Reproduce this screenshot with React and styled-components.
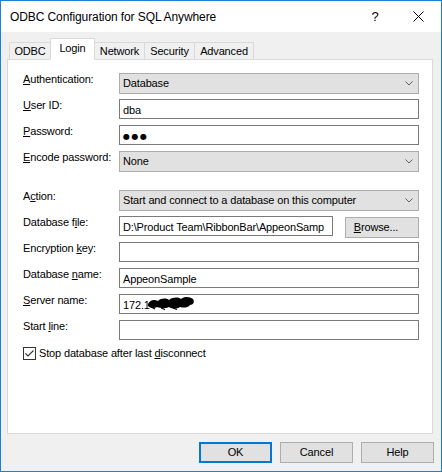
import React from "react";
import styled, { createGlobalStyle } from "styled-components";

const GlobalStyle = createGlobalStyle`
  html, body { margin: 0; padding: 0; background: #ffffff; }
  body { font-family: "Liberation Sans", Arial, sans-serif; }
`;

const Window = styled.div`
  width: 442px;
  height: 472px;
  box-sizing: border-box;
  border: 1px solid #1a7fd6;
  background: #f0f0f0;
  display: flex;
  flex-direction: column;
  font-family: "Liberation Sans", Arial, sans-serif;
  font-size: 11px;
  letter-spacing: -0.15px;
  color: #000;
`;

const TitleBar = styled.div`
  height: 31px;
  flex-shrink: 0;
  background: #fff;
  display: flex;
  align-items: stretch;
`;

const Title = styled.div`
  flex: 1;
  display: flex;
  align-items: center;
  padding-left: 9px;
  font-size: 12px;
  letter-spacing: -0.1px;
  line-height: 14px;
`;

const TitleButton = styled.div`
  width: ${(p) => p.$w}px;
  display: flex;
  align-items: center;
  justify-content: center;
  font-size: 13px;
  letter-spacing: 0;
`;

const Body = styled.div`
  flex: 1;
  display: flex;
  flex-direction: column;
  padding: 6px 8px 0 6px;
`;

const TabStrip = styled.div`
  display: flex;
  align-items: flex-end;
  height: 22px;
  padding-left: 2px;
  margin-bottom: -1px;
  position: relative;
  z-index: 1;
`;

const Tab = styled.div`
  box-sizing: border-box;
  width: ${(p) => p.$w}px;
  height: ${(p) => (p.$active ? 22 : 18)}px;
  margin-left: -1px;
  &:first-child { margin-left: 0; }
  border: 1px solid #d9d9d9;
  border-bottom-color: ${(p) => (p.$active ? "#ffffff" : "#d9d9d9")};
  background: ${(p) => (p.$active ? "#ffffff" : "#f0f0f0")};
  display: flex;
  align-items: center;
  justify-content: center;
  padding-bottom: ${(p) => (p.$active ? 2 : 0)}px;
  line-height: 13px;
  position: relative;
  z-index: ${(p) => (p.$active ? 2 : 1)};
`;

const Panel = styled.div`
  height: 375px;
  box-sizing: border-box;
  background: #fff;
  border: 1px solid #d9d9d9;
  padding: 13px 0 0 15px;
  display: flex;
  flex-direction: column;
  gap: 19px;
`;

const Section = styled.div`
  display: flex;
  flex-direction: column;
  gap: 6px;
`;

const Row = styled.div`
  display: flex;
  align-items: flex-start;
  height: 20px;
`;

const Label = styled.div`
  width: 96px;
  flex-shrink: 0;
  line-height: 13px;
  white-space: nowrap;
`;

const Key = styled.u`
  text-decoration: underline;
  text-underline-offset: 1px;
`;

const Combo = styled.div`
  width: ${(p) => p.$w || 300}px;
  height: 21px;
  box-sizing: border-box;
  border: 1px solid #adadad;
  background: #e1e1e1;
  display: flex;
  align-items: center;
  justify-content: space-between;
  padding: 0 5px 0 3px;
  line-height: 13px;
  white-space: nowrap;
`;

const TextBox = styled.div`
  width: ${(p) => p.$w || 300}px;
  height: 20px;
  box-sizing: border-box;
  border: 1px solid #7a7a7a;
  background: #fff;
  padding: 4px 2px 0 3px;
  line-height: 13px;
  white-space: nowrap;
  overflow: hidden;
  display: flex;
  align-items: flex-start;
`;

const Dots = styled.span`
  font-family: "DejaVu Sans", sans-serif;
  font-size: 8px;
  letter-spacing: 1.5px;
  line-height: 13px;
`;

const Button = styled.div`
  width: ${(p) => p.$w || 73}px;
  height: 21px;
  box-sizing: border-box;
  border: ${(p) => (p.$primary ? "2px solid #0078d7" : "1px solid #adadad")};
  background: #e1e1e1;
  display: flex;
  align-items: center;
  justify-content: center;
  line-height: 13px;
  flex-shrink: 0;
`;

const BrowseButton = styled(Button)`
  margin-left: 12px;
  margin-top: 1px;
  padding-right: 12px;
`;

const CheckRow = styled.div`
  display: flex;
  align-items: center;
  gap: 3px;
  height: 13px;
  margin-top: 1px;
  line-height: 13px;
`;

const CheckBox = styled.div`
  width: 13px;
  height: 13px;
  box-sizing: border-box;
  border: 1px solid #333;
  background: #fff;
  display: flex;
`;

const Footer = styled.div`
  display: flex;
  justify-content: flex-end;
  gap: 8px;
  margin-top: 8px;
  margin-right: -1px;
`;

const Chevron = () => (
  <svg width="8" height="5" viewBox="0 0 8 5">
    <polyline points="0.5,0.5 4,4 7.5,0.5" fill="none" stroke="#606060" strokeWidth="1" />
  </svg>
);

const CloseIcon = () => (
  <svg width="11" height="11" viewBox="0 0 11 11">
    <path d="M0.5 0.5 L10.5 10.5 M10.5 0.5 L0.5 10.5" stroke="#000" strokeWidth="1" />
  </svg>
);

const CheckMark = () => (
  <svg width="11" height="11" viewBox="0 0 11 11">
    <polyline points="1.5,5.5 4,8 9.5,2.5" fill="none" stroke="#333" strokeWidth="1.1" />
  </svg>
);

const Scribble = () => (
  <svg width="48" height="14" viewBox="0 0 48 14" style={{ marginLeft: -3, marginTop: -3 }}>
    <path
      d="M1 8 C3 4 7 3 11 5 C14 2 19 2 22 4 C26 1 31 1 34 3 C38 0 43 1 46 3 C48 6 46 9 43 9 C41 12 36 12 33 11 C30 13 25 13 22 11 C18 13 13 12 10 11 C7 13 3 12 1 10 Z"
      fill="#000"
    />
    <path d="M4 11 L8 13 M14 12 L18 13.5 M26 12 L30 13.5" stroke="#000" strokeWidth="1.2" />
  </svg>
);

const tabs = [
  { label: "ODBC", w: 42 },
  { label: "Login", w: 45, active: true },
  { label: "Network", w: 51 },
  { label: "Security", w: 51 },
  { label: "Advanced", w: 60 },
];

export default function App() {
  return (
    <>
      <GlobalStyle />
      <Window>
        <TitleBar>
          <Title>ODBC Configuration for SQL Anywhere</Title>
          <TitleButton $w={40}>?</TitleButton>
          <TitleButton $w={46}>
            <CloseIcon />
          </TitleButton>
        </TitleBar>
        <Body>
          <TabStrip>
            {tabs.map((t) => (
              <Tab key={t.label} $w={t.w} $active={t.active}>
                {t.label}
              </Tab>
            ))}
          </TabStrip>
          <Panel>
            <Section>
              <Row>
                <Label><Key>A</Key>uthentication:</Label>
                <Combo>
                  <span>Database</span>
                  <Chevron />
                </Combo>
              </Row>
              <Row>
                <Label><Key>U</Key>ser ID:</Label>
                <TextBox>dba</TextBox>
              </Row>
              <Row>
                <Label><Key>P</Key>assword:</Label>
                <TextBox>
                  <Dots>●●●</Dots>
                </TextBox>
              </Row>
              <Row>
                <Label><Key>E</Key>ncode password:</Label>
                <Combo>
                  <span>None</span>
                  <Chevron />
                </Combo>
              </Row>
            </Section>
            <Section>
              <Row>
                <Label>A<Key>c</Key>tion:</Label>
                <Combo>
                  <span>Start and connect to a database on this computer</span>
                  <Chevron />
                </Combo>
              </Row>
              <Row>
                <Label>Database f<Key>i</Key>le:</Label>
                <TextBox $w={214}>D:\Product Team\RibbonBar\AppeonSamp</TextBox>
                <BrowseButton $w={74}>
                  <span><Key>B</Key>rowse...</span>
                </BrowseButton>
              </Row>
              <Row>
                <Label>Encryption <Key>k</Key>ey:</Label>
                <TextBox />
              </Row>
              <Row>
                <Label>Database <Key>n</Key>ame:</Label>
                <TextBox>AppeonSample</TextBox>
              </Row>
              <Row>
                <Label><Key>S</Key>erver name:</Label>
                <TextBox>
                  <span>172.1</span>
                  <Scribble />
                </TextBox>
              </Row>
              <Row>
                <Label>Start <Key>l</Key>ine:</Label>
                <TextBox />
              </Row>
              <CheckRow>
                <CheckBox>
                  <CheckMark />
                </CheckBox>
                <span>Stop database after last <Key>d</Key>isconnect</span>
              </CheckRow>
            </Section>
          </Panel>
          <Footer>
            <Button $primary>OK</Button>
            <Button>Cancel</Button>
            <Button>Help</Button>
          </Footer>
        </Body>
      </Window>
    </>
  );
}
